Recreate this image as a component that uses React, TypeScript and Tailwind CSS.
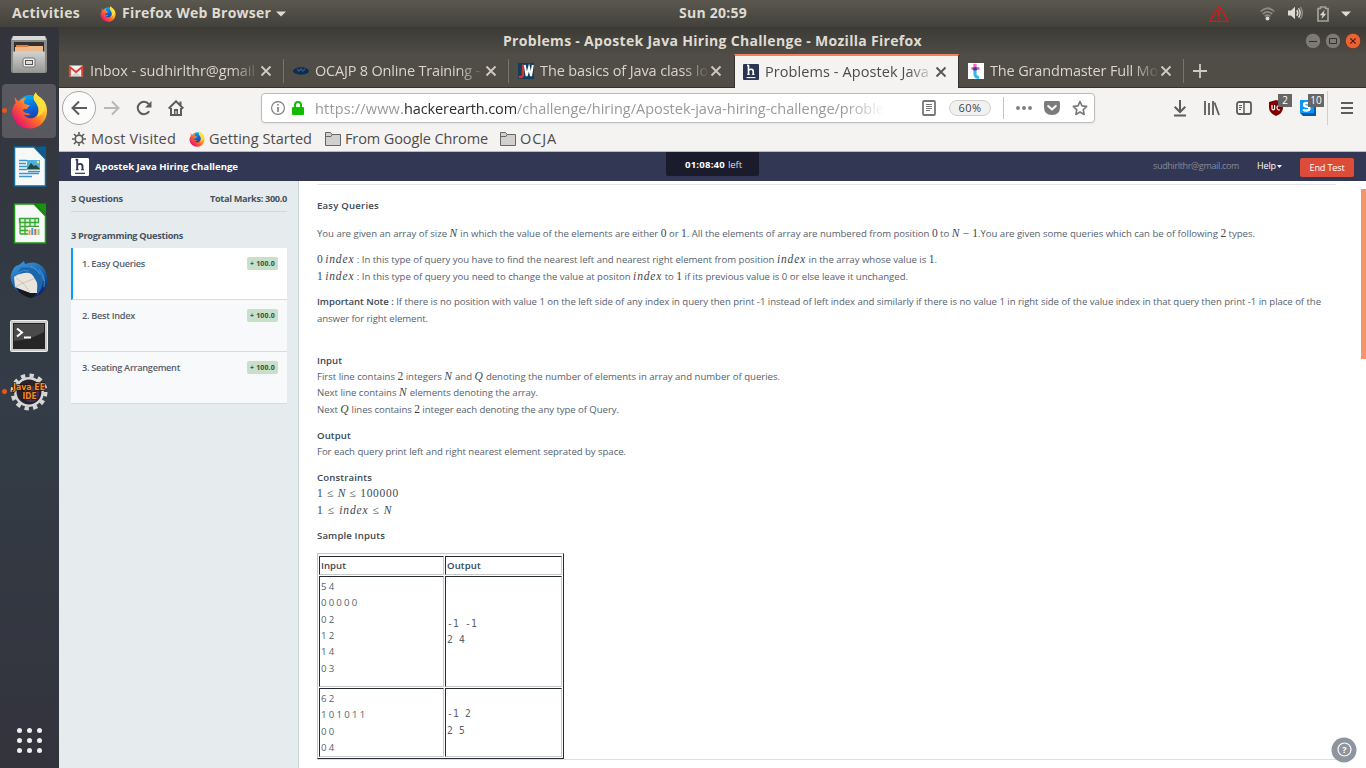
import React, { useLayoutEffect, useRef } from "react";

/* Spreads its text over an exact width by adjusting the tracking. */
function Fit({ w, className = "", children }: { w: number; className?: string; children: React.ReactNode }) {
  const ref = useRef<HTMLSpanElement>(null);
  useLayoutEffect(() => {
    const el = ref.current;
    if (!el) return;
    const n = (el.textContent || "").length;
    let d = 0;
    el.style.letterSpacing = "0px";
    for (let i = 0; i < 3; i++) {
      d += (w - el.getBoundingClientRect().width) / n;
      el.style.letterSpacing = d + "px";
    }
  }, [w]);
  return (
    <span ref={ref} className={"inline-block whitespace-pre " + className}>
      {children}
    </span>
  );
}

function Firefox({ size, id }: { size: number; id: string }) {
  return (
    <svg width={size} height={size} viewBox="0 0 38 38" className="block">
      <defs>
        <linearGradient id={id + "a"} x1="0.9" y1="0.1" x2="0.15" y2="0.85">
          <stop offset="0" stopColor="#fff44f" />
          <stop offset="0.35" stopColor="#ffb02a" />
          <stop offset="0.6" stopColor="#ff6a2a" />
          <stop offset="1" stopColor="#e8156a" />
        </linearGradient>
        <linearGradient id={id + "b"} x1="0.3" y1="0" x2="0.6" y2="1">
          <stop offset="0" stopColor="#00b3f4" />
          <stop offset="0.5" stopColor="#0a62d8" />
          <stop offset="1" stopColor="#362d84" />
        </linearGradient>
      </defs>
      <circle cx="20" cy="18" r="15" fill={"url(#" + id + "b)"} />
      <path
        d="M4 5c-.5 3 .5 5 1 6C2 14 1 18 1.200 21C2 31 10 37.500 19 37.500C30 37.500 37 29 37 19.500C37 12 33 8 30 5.500C27 3.500 26 2 25.500.5C22.500 4 23 7 24.500 9.500C27 13 29 17 28 21C27 25 23 27.500 19.500 27C16 26.500 13.500 24.500 13.500 23C15 24 18 24.500 20 22.500C18 22 13 21.500 12 19C12.500 17 15 17.500 16.500 17.500C17 15.500 19 14.500 19.500 13.500C17 13 14.500 13 13.500 11.500C13 9 14 7.500 16 6C12.500 6 10 7.500 8.500 9.500C6.500 9 5 8 4 5Z"
        fill={"url(#" + id + "a)"}
      />
      <path d="M25.500.5C22.500 4 23 7 24.500 9.500C29 14 30 21 26 26C35 22 37 14 34 9.500C32 7 27 4.500 25.500.5Z" fill="#ffe23c" opacity=".85" />
    </svg>
  );
}

function HLogo({ size, fg, bg }: { size: number; fg: string; bg: string }) {
  return (
    <svg width={size} height={size} viewBox="0 0 18 18" className="block shrink-0">
      <rect width="18" height="18" rx="1.200" fill={bg} />
      <path d="M6.200 1V12M6.500 7.200c.8-1.600 5-2.300 5 1.200V12M4.600 1.600h1.700" stroke={fg} strokeWidth="1.900" fill="none" />
      <path d="M4.800 11.800h2.800M10 11.800h3" stroke={fg} strokeWidth="1" />
      <path d="M4 15.300h10" stroke={fg} strokeWidth="1.200" />
    </svg>
  );
}

function TabIcon({ kind }: { kind: string }) {
  if (kind === "gmail")
    return (
      <svg width="16" height="16" viewBox="0 0 16 16" className="block">
        <path d="M1 2.500h14v11H1z" fill="#f2f2f2" />
        <path d="M3 13 8 8.500 13 13" fill="#d5d5d5" />
        <path d="M1.800 13.500V4L8 9l6.200-5v9.500" stroke="#d93f33" strokeWidth="2" fill="none" />
      </svg>
    );
  if (kind === "ocajp")
    return (
      <svg width="16" height="16" viewBox="0 0 16 16" className="block">
        <ellipse cx="8" cy="8" rx="8" ry="3.700" fill="#0e2b52" />
        <path d="M4 6 6 8.200 8 6 10 8.200 12 6" stroke="#3c587a" strokeWidth="1.200" fill="none" />
      </svg>
    );
  if (kind === "jw")
    return (
      <svg width="16" height="16" viewBox="0 0 16 16" className="block">
        <rect width="16" height="16" fill="#123e5e" />
        <path d="M5 1.500V11.500Q5 14 2.500 14H.8" stroke="#dc3328" strokeWidth="2.300" fill="none" />
        <path d="M6.800 2 8.600 13 11 4.500 13 13 14.800 2" stroke="#fff" strokeWidth="2" fill="none" />
      </svg>
    );
  if (kind === "he") return <HLogo size={16} fg="#fff" bg="#2c3454" />;
  return (
    <svg width="16" height="16" viewBox="0 0 16 16" className="block">
      <rect width="16" height="16" fill="#fff" />
      <path d="M7 6v5q0 3.500 4 3.300" stroke="#38b8e4" strokeWidth="3.200" fill="none" />
      <path d="M7 .8V7" stroke="#f469b8" strokeWidth="3.200" />
      <path d="M3.500 5.500h8" stroke="#c94fc0" strokeWidth="2.400" />
      <path d="M5.400 4.300h3.300v3.200H5.400z" fill="#5428b0" />
    </svg>
  );
}

const tabs = [
  { icon: "gmail", text: "Inbox - sudhirlthr@gmail", w: 165 },
  { icon: "ocajp", text: "OCAJP 8 Online Training -", w: 165 },
  { icon: "jw", text: "The basics of Java class lo", w: 168 },
  { icon: "he", text: "Problems - Apostek Java", w: 164, active: true },
  { icon: "t", text: "The Grandmaster Full Mo", w: 168 },
];

function Tab({ icon, text, w, active }: { icon: string; text: string; w: number; active?: boolean }) {
  return (
    <div
      className={
        "flex h-full w-[225px] shrink-0 items-center " +
        (active
          ? "border-x border-t-2 border-x-[#33322e] border-t-[#f2825a] bg-[#f4f3f1] pl-[8px] text-[#4c4c4c]"
          : "border-b border-[#33322e] bg-[#504d46] pt-px pl-[9px] text-[#d9d5cb]")
      }
    >
      <TabIcon kind={icon} />
      <div className="ml-[6px] w-[170px] text-[14.5px] leading-5 [mask-image:linear-gradient(to_right,black_84%,transparent_100%)]">
        <Fit w={w}>{text}</Fit>
      </div>
      <svg width="12" height="12" viewBox="0 0 12 12" className="block">
        <path d="M1.500 1.500l9 9M10.500 1.500l-9 9" stroke={active ? "#555" : "#cfcbc2"} strokeWidth="1.800" />
      </svg>
      {!active && icon !== "jw" && <div className="ml-auto h-6 w-px bg-[#78756d]" />}
    </div>
  );
}

function Folder() {
  return (
    <svg width="16" height="14" viewBox="0 0 16 14" className="block">
      <path d="M.5 13.500V.5h5l1.500 2h8.500v11z" fill="#d2d0ce" stroke="#666" />
      <path d="M.5 4.500H6l1.200-2" fill="none" stroke="#666" />
    </svg>
  );
}

function Dock() {
  return (
    <div className="flex w-[59px] shrink-0 flex-col items-center bg-linear-to-b from-[#33343b] via-[#333d47] to-[#33333c]">
      <div className="flex h-[56px] items-center pr-[2px] pb-[2px]">
        <svg width="36" height="37" viewBox="0 0 36 37">
          <defs>
            <linearGradient id="cab" x1="0" y1="0" x2="0" y2="1">
              <stop offset="0" stopColor="#d2d2d0" />
              <stop offset="1" stopColor="#979795" />
            </linearGradient>
          </defs>
          <path d="M2 0h32l2 3v31q0 3-2 3H2q-2 0-2-3V3z" fill="#8b8b89" />
          <path d="M2 0h32l1 4H1z" fill="#d9d9d7" />
          <rect x="3" y="6" width="30" height="12" fill="#33302e" />
          <path d="M5 9h12l1 1h13v6H5z" fill="#e57d3c" />
          <path d="M4 11h13l1-1h14v6H4z" fill="#efba8a" />
          <rect x="2" y="15.500" width="32" height="21" rx="1" fill="url(#cab)" />
          <rect x="12" y="22" width="12" height="9" rx="2" fill="#ececec" stroke="#777" />
          <rect x="14.500" y="24.500" width="7" height="4" fill="#ddd" stroke="#555" />
        </svg>
      </div>
      <div className="flex h-[55px] w-full items-center">
        <div className="ml-0.5 flex h-[54px] w-[54px] items-center rounded bg-[#58585e]">
          <span className="size-[5px] shrink-0 rounded-full bg-[#e95420]" />
          <div className="ml-1"><Firefox size={37} id="dock" /></div>
        </div>
      </div>
      <div className="flex h-[57px] items-center">
        <svg width="34" height="41" viewBox="0 0 34 41">
          <path d="M1.500 1H21L32.500 13V40H1.500z" fill="#f7f8f8" stroke="#126a9d" strokeWidth="1.500" />
          <path d="M22 .5h11V12z" fill="#095f94" />
          <path d="M6 14.500h8M6 17.500h7M6 20.500h8M6 23.500h8M6 27.500h20M6 30.500h13M15 25.500h12" stroke="#3c98ca" strokeWidth="1.300" />
          <rect x="14" y="14" width="13" height="10" fill="#4eb0de" />
          <path d="M14 23 18 17l3 3 2-1 4 4z" fill="#294a38" />
          <circle cx="25" cy="16" r="1.300" fill="#fbe36a" />
        </svg>
      </div>
      <div className="flex h-[56px] items-center">
        <svg width="34" height="41" viewBox="0 0 34 41">
          <path d="M1.500 1H21L32.500 13V40H1.500z" fill="#f7f8f8" stroke="#1f9412" strokeWidth="1.500" />
          <path d="M22 .5h11V12z" fill="#19930b" />
          <rect x="7" y="15" width="18" height="16" fill="#e5f5e0" />
          <path d="M6.500 15.500h19v4h-19zM7 15v16M12 15v16M17 15v16M22 15v10M7 23.500h19M7 27.500h10M7 31h10" stroke="#39a535" strokeWidth="1.300" fill="none" />
          <rect x="15" y="24" width="12" height="8" fill="#f3f3f3" />
          <path d="M16.500 32v-5" stroke="#e99a41" strokeWidth="2" />
          <path d="M19.300 32v-7" stroke="#4a9bd4" strokeWidth="2" />
          <path d="M22.300 32v-6" stroke="#d66b42" strokeWidth="2" />
          <path d="M25.500 32v-6" stroke="#92cf86" strokeWidth="2" />
        </svg>
      </div>
      <div className="flex h-[57px] items-center pr-[2px] pb-[2px]">
        <svg width="38" height="38" viewBox="0 0 38 38">
          <defs>
            <linearGradient id="tb" x1="0.2" y1="0" x2="0.7" y2="1">
              <stop offset="0" stopColor="#3b98db" />
              <stop offset="0.5" stopColor="#1c63af" />
              <stop offset="1" stopColor="#111d62" />
            </linearGradient>
          </defs>
          <path d="M9 5 14 1l1 3Q28-1 35 10q5 11 0 19-5 8-15 9L7 31Q-1 22 1 14 4 5 9 5z" fill="url(#tb)" />
          <path d="M4 17Q12 11 23 13L28 20 27 33 20 33 5 27z" fill="#e9e4dc" />
          <path d="M6 18 13 23 26 18M5 27 13 23 20 32" stroke="#c6beb1" strokeWidth=".8" fill="none" />
          <path d="M6 28 20 33 27 33 22 38Q12 37 6 28" fill="#17171d" />
          <path d="M8 14Q9 5 20 6 32 8 33 19 33 28 27 35 29 24 25 19 21 11 14 13z" fill="#1c66ad" />
          <path d="M13 7Q24 5 30 14M20 6q11 3 14 15M29 9q7 7 5 18M8 13q5-4 11-2" stroke="#469bd8" strokeWidth=".8" fill="none" />
        </svg>
      </div>
      <div className="flex h-[57px] items-center pr-[2px] pb-[2px]">
        <svg width="38" height="32" viewBox="0 0 38 32">
          <rect x=".5" y=".5" width="37" height="31" rx="1" fill="#c9c9c7" stroke="#eee" />
          <rect x="3" y="3" width="32" height="26" fill="#252525" />
          <path d="M4 4h30v8Q20 20 4 21z" fill="#4a4a4a" />
          <path d="M7 8.500 12 12.500 7 16.500M14 17.500h7" stroke="#fff" strokeWidth="2" fill="none" />
        </svg>
      </div>
      <div className="flex h-[53px] w-full items-center">
        <span className="ml-0.5 size-[5px] rounded-full bg-[#e95420]" />
        <svg width="38" height="38" viewBox="0 0 38 38" className="ml-[3px]">
          <circle cx="19" cy="19" r="16.500" fill="none" stroke="#d6d6d4" strokeWidth="4" strokeDasharray="4.320 4.320" />
          <circle cx="19" cy="19" r="13.700" fill="#27222f" stroke="#d6d6d4" strokeWidth="2.500" />
          <circle cx="21" cy="21" r="8" fill="#44345b" />
          <text x="19" y="17" textAnchor="middle" fontFamily="DejaVu Sans" fontSize="8.200" fontWeight="bold" fill="#f28a24" stroke="#2b170a" strokeWidth="1.600" paintOrder="stroke" textLength="32" lengthAdjust="spacingAndGlyphs">Java EE</text>
          <text x="19.500" y="25.500" textAnchor="middle" fontFamily="DejaVu Sans" fontSize="8.200" fontWeight="bold" fill="#f28a24" stroke="#2b170a" strokeWidth="1.600" paintOrder="stroke" textLength="14" lengthAdjust="spacingAndGlyphs">IDE</text>
        </svg>
      </div>
      <div className="mt-auto mb-[15px] grid grid-cols-3 gap-[5px] pr-px">
        {Array.from({ length: 9 }).map((_, i) => (
          <span key={i} className="size-[5px] rounded-full bg-[#eeeeec]" />
        ))}
      </div>
    </div>
  );
}

function TopBar() {
  return (
    <div className="flex h-[27px] shrink-0 items-center bg-linear-to-b from-[#5b584f] to-[#42413b] pl-3 text-[14px] leading-[24px] font-bold text-[#dfdbd2]">
      <Fit w={68} className="pb-0.5">Activities</Fit>
      <div className="ml-5 w-[22px]"><Firefox size={16} id="top" /></div>
      <Fit w={149} className="pb-0.5">Firefox Web Browser</Fit>
      <svg width="10" height="6" viewBox="0 0 10 6" className="ml-[5px]"><path d="M0 .5h10L5 5.500z" fill="#dfdbd2" /></svg>
      <Fit w={68} className="ml-[393px] pb-0.5">Sun 20:59</Fit>
      <svg width="20" height="17" viewBox="0 0 20 17" className="mb-px ml-auto">
        <path d="M10 1 19.300 16.400H.7z" fill="none" stroke="#ee1111" strokeWidth="1.200" />
        <path d="M10 5.500v6" stroke="#ee1111" strokeWidth="1.600" />
        <path d="M10 13v1.700" stroke="#ee1111" strokeWidth="1.600" />
      </svg>
      <svg width="15" height="14" viewBox="0 0 15 14" className="ml-[31px]">
        <path d="M.7 4.500Q7.500-2 14.300 4.500M2.800 7q4.700-4.200 9.400 0M4.700 9.300q2.800-2.300 5.600 0" fill="none" stroke="#8c8980" strokeWidth="1.700" />
        <circle cx="7.500" cy="11.500" r="2" fill="#dfdbd2" />
      </svg>
      <svg width="17" height="14" viewBox="0 0 17 14" className="mb-px ml-3">
        <path d="M1 4.500h3L8 .8v12.400L4 9.500H1z" fill="#dfdbd2" />
        <path d="M9.800 4.200q2 2.800 0 5.600" fill="none" stroke="#dfdbd2" strokeWidth="1.500" />
        <path d="M11.500 2.400q3.300 4.600 0 9.200" fill="none" stroke="#dfdbd2" strokeWidth="1.400" />
        <path d="M13.300.8q4.200 6.200 0 12.400" fill="none" stroke="#8c8980" strokeWidth="1.500" />
      </svg>
      <svg width="12" height="16" viewBox="0 0 12 16" className="ml-[13px]">
        <path d="M1 2.500h2.500V1h5v1.500H11v12.500H1z" fill="none" stroke="#a5a299" strokeWidth="1.700" />
        <path d="M7.700 4 2.800 9.300h2.700L4.400 13 9.300 7.700H6.700z" fill="#dfdbd2" />
      </svg>
      <svg width="10" height="6" viewBox="0 0 10 6" className="mr-[15px] ml-3"><path d="M0 .5h10L5 5.500z" fill="#dfdbd2" /></svg>
    </div>
  );
}

function TitleBar() {
  return (
    <div className="flex h-[27px] shrink-0 items-center bg-linear-to-b from-[#3b3a35] to-[#4f4c46] pl-[444px] text-[14px] leading-7 font-bold text-[#dfdbd2]">
      <Fit w={419}>Problems - Apostek Java Hiring Challenge - Mozilla Firefox</Fit>
      <div className="mr-[5px] ml-auto flex gap-1">
        <svg width="16" height="16" viewBox="0 0 16 16"><circle cx="8" cy="8" r="7.700" fill="#7c7a73" stroke="#33322e" strokeWidth=".6" /><path d="M4 8.500h8" stroke="#33322e" /></svg>
        <svg width="16" height="16" viewBox="0 0 16 16"><circle cx="8" cy="8" r="7.700" fill="#7c7a73" stroke="#33322e" strokeWidth=".6" /><path d="M4.500 5.500h7v5h-7z" stroke="#33322e" fill="none" /></svg>
        <svg width="16" height="16" viewBox="0 0 16 16"><circle cx="8" cy="8" r="7.700" fill="#ec6233" stroke="#33322e" strokeWidth=".6" /><path d="M5.300 5.300l5.400 5.400M10.700 5.300l-5.400 5.400" stroke="#40210f" strokeWidth="1.200" /></svg>
      </div>
    </div>
  );
}

const S = { fill: "none", stroke: "#5c5c5c", strokeWidth: 2 } as const;

function NavBar() {
  return (
    <div className="flex h-10 shrink-0 items-center bg-[#f4f3f1]">
      <div className="ml-[3px] flex size-[34px] items-center justify-center rounded-full border border-[#a9a8a6] bg-[#fcfcfc]">
        <svg width="16" height="16" viewBox="0 0 16 16"><path d="M16 8H1.500M8 1.500 1.500 8 8 14.500" {...S} /></svg>
      </div>
      <svg width="16" height="16" viewBox="0 0 16 16" className="ml-2"><path d="M0 8h14.500M8 1.500 14.500 8 8 14.500" {...S} stroke="#b9b8b6" /></svg>
      <svg width="16" height="16" viewBox="0 0 16 16" className="ml-4">
        <path d="M13.200 11.300A6.200 6.200 0 1 1 12.700 4" {...S} />
        <path d="M15.500 1v6.500H9z" fill="#5c5c5c" />
      </svg>
      <svg width="16" height="16" viewBox="0 0 16 16" className="ml-4">
        <path d="M.7 8.500 8 1.300l7.300 7.200M3 8v7h10V8M12.500 1.500V5" {...S} />
        <path d="M6 9h4v6H6z" fill="#5c5c5c" /><path d="M7.500 11h1v3h-1z" fill="#f4f3f1" />
      </svg>
      <div className="ml-[77px] flex h-[30px] w-[834px] items-center rounded-[4px] border border-[#bdbcba] bg-white text-[14.5px] text-[#9a9a9a] shadow-sm shadow-black/5">
        <svg width="14" height="14" viewBox="0 0 14 14" className="ml-[9px]">
          <circle cx="7" cy="7" r="6.400" fill="none" stroke="#777" strokeWidth="1.100" /><path d="M7 3v1.600M7 6v5" stroke="#777" strokeWidth="1.500" />
        </svg>
        <svg width="12" height="14" viewBox="0 0 12 14" className="ml-[7px]">
          <rect y="6" width="12" height="8" rx="1" fill="#12bc00" /><path d="M3 7V4a3 3 0 0 1 6 0v3" fill="none" stroke="#12bc00" strokeWidth="2" />
        </svg>
        <div className="ml-[11px] w-[570px] whitespace-nowrap pt-px [mask-image:linear-gradient(to_right,black_93%,transparent_100%)]">
          <Fit w={89}>https://www.</Fit><Fit w={113} className="text-[#2e2e2e]">hackerearth.com</Fit><Fit w={367}>/challenge/hiring/Apostek-java-hiring-challenge/proble</Fit>
        </div>
        <svg width="14" height="16" viewBox="0 0 14 16" className="ml-[37px]">
          <rect x="1" y="1" width="12" height="14" rx="1" fill="none" stroke="#777" strokeWidth="1.800" /><path d="M4 4.500h6M4 6.500h6M4 8.500h6M4 10.500h4" stroke="#777" />
        </svg>
        <div className="ml-[13px] flex h-4 w-[42px] items-center justify-center rounded-full border border-[#cfcecd] bg-[#f1f1f1] text-[11px] leading-3 text-[#444]"><Fit w={23}>60%</Fit></div>
        <div className="ml-3 h-[22px] w-px bg-[#c4c4c4]" />
        <svg width="16" height="4" viewBox="0 0 16 4" className="ml-[12px]"><circle cx="2" cy="2" r="1.900" fill="#7b7b7b" /><circle cx="8" cy="2" r="1.900" fill="#7b7b7b" /><circle cx="14" cy="2" r="1.900" fill="#7b7b7b" /></svg>
        <svg width="16" height="14" viewBox="0 0 16 14" className="ml-3"><path d="M1.500 0h13Q16 0 16 1.500V6Q16 14 8 14T0 6V1.500Q0 0 1.500 0z" fill="#7b7b7b" /><path d="M4.200 5 8 8.500 11.800 5" stroke="#fff" strokeWidth="2" fill="none" strokeLinecap="round" /></svg>
        <svg width="16" height="16" viewBox="0 0 16 16" className="ml-3"><path d="M8 1.500 10 5.800 14.700 6.400 11.300 9.700 12.100 14.400 8 12.100 3.900 14.400 4.700 9.700 1.300 6.400 6 5.800z" fill="none" stroke="#7b7b7b" strokeWidth="1.700" strokeLinejoin="round" /></svg>
      </div>
      <svg width="14" height="17" viewBox="0 0 14 17" className="ml-[78px]"><path d="M7 0v12M1.700 6.700 7 12l5.300-5.300M1 15.500h12" {...S} /></svg>
      <svg width="16" height="16" viewBox="0 0 16 16" className="ml-[17px]"><path d="M1 1v14M5 3v12M9 1v14" {...S} strokeWidth="1.800" /><path d="M10.500 2.500 15 15" {...S} strokeWidth="1.800" /></svg>
      <svg width="16" height="14" viewBox="0 0 16 14" className="ml-4"><rect x="1" y="1" width="14" height="12" rx="2" {...S} strokeWidth="1.800" /><path d="M8 1v12" {...S} strokeWidth="1.500" /><path d="M3 4.500h3M3 6.500h3M3 8.500h2" stroke="#5c5c5c" /></svg>
      <div className="relative ml-[17px] h-4 w-4">
        <svg width="14" height="16" viewBox="0 0 14 16"><path d="M7 0l7 2v6q0 5-7 8-7-3-7-8V2z" fill="#800000" /><path d="M3 5v3.500q0 1.300 1.300 1.300t1.300-1.300V5M11 5.500H9.500Q8 6 8 7.800T9.500 10H11" fill="none" stroke="#fff" strokeWidth="1.200" /></svg>
        <span className="absolute -top-[6px] left-[9px] flex h-[13px] w-[14px] items-center justify-center bg-[#666] text-[10px] text-white">2</span>
      </div>
      <div className="relative ml-[15px] h-4 w-4">
        <svg width="16" height="16" viewBox="0 0 16 16"><path d="M0 0h13l3 3v13H3l-3-3z" fill="#075aab" /><path d="M0 0h14v13H0z" fill="#0996f8" /><path d="M10 4.200Q9 3 6.700 3 4 3 4 4.700T6.700 6.700 9.500 8.600 6.700 10.500 3.500 9.200" fill="none" stroke="#fff" strokeWidth="2.300" /></svg>
        <span className="absolute -top-[6px] left-[8px] flex h-[13px] w-4 items-center justify-center bg-[#666] text-[10px] text-white">10</span>
      </div>
      <div className="ml-[11px] h-[34px] w-px bg-[#cfcecc]" />
      <svg width="12" height="12" viewBox="0 0 12 12" className="ml-[13px]"><path d="M0 1h12M0 6h12M0 11h12" {...S} /></svg>
    </div>
  );
}

function Bookmarks() {
  return (
    <div className="flex h-[24px] shrink-0 items-center border-b border-[#bcbbb9] bg-[#f4f3f1] pb-px pl-[13px] text-[14.500px] leading-[20px] text-[#4c4c4c]">
      <svg width="14" height="14" viewBox="0 0 14 14">
        <circle cx="7" cy="7" r="3.800" fill="none" stroke="#5c5c5c" strokeWidth="1.800" />
        <path d="M7 0v2.500M7 11.500V14M0 7h2.500M11.500 7H14M2 2l2 2M10 10l2 2M12 2l-2 2M4 10l-2 2" stroke="#5c5c5c" strokeWidth="1.600" />
      </svg>
      <Fit w={85} className="ml-[5px]">Most Visited</Fit>
      <div className="mr-1 ml-[13px]"><Firefox size={16} id="bm" /></div>
      <Fit w={103}>Getting Started</Fit>
      <div className="mr-1 ml-[13px]"><Folder /></div>
      <Fit w={143}>From Google Chrome</Fit>
      <div className="mr-1 ml-3"><Folder /></div>
      <Fit w={37}>OCJA</Fit>
    </div>
  );
}

function SiteHeader() {
  return (
    <div className="flex h-[29px] shrink-0 bg-[#323754] text-[9.600px] leading-[29px]">
      <div className="flex w-[607px] items-center pl-3">
        <HLogo size={18} fg="#323754" bg="#fff" />
        <Fit w={143} className="ml-[6px] font-bold text-white">Apostek Java Hiring Challenge</Fit>
      </div>
      <div className="h-6 w-[93px] rounded-b-[2px] bg-[#1a1c2b] pl-[19px] leading-[25px] text-white">
        <Fit w={40} className="font-bold">01:08:40</Fit><Fit w={14} className="ml-[3px] text-[#dcdde4]">left</Fit>
      </div>
      <div className="ml-auto flex pr-3 leading-[27px]">
        <Fit w={86} className="text-[9px] text-[#858a9c]">sudhirlthr@gmail.com</Fit>
        <Fit w={19} className="ml-[18px] text-[9px] text-white">Help</Fit>
        <svg width="5" height="3" viewBox="0 0 5 3" className="mt-[13px] ml-px"><path d="M0 0h5L2.500 3z" fill="#fff" /></svg>
        <div className="mt-[6px] ml-[18px] flex h-[19px] w-[54px] items-center justify-center rounded-[2px] bg-[#dd4b39] pb-px text-[9.200px] text-white"><Fit w={35}>End Test</Fit></div>
      </div>
    </div>
  );
}

function Question({ text, w, active }: { text: string; w: number; active?: boolean }) {
  return (
    <div className={"flex h-[52px] items-start justify-between border-b border-[#d8dcdf] pt-[9px] pr-[9px] " + (active ? "border-l-2 border-l-[#0a9bf5] bg-white pl-[9px]" : "bg-[#f8f9fb] pl-[11px]")}>
      <Fit w={w} className="text-[9.200px] leading-[14px] font-semibold text-[#525f6d]">{text}</Fit>
      <span className="flex h-[13px] w-[31px] items-center justify-center rounded-[2px] bg-[#c8dfc8] pt-px text-[7px] font-bold text-[#3a4b4a]"><Fit w={25}>+ 100.0</Fit></span>
    </div>
  );
}

function Sidebar() {
  return (
    <div className="w-[240px] shrink-0 border-r border-[#cdd2d5] bg-[#e6ebee] px-3 pr-[11px] text-[9.200px] text-[#46535f]">
      <div className="flex h-[31px] justify-between border-b border-[#d2d7da] pt-[10px] leading-4 font-bold">
        <Fit w={52}>3 Questions</Fit><Fit w={77}>Total Marks: 300.0</Fit>
      </div>
      <div className="h-[36px] pt-4 leading-4 font-bold"><Fit w={112}>3 Programming Questions</Fit></div>
      <Question text="1. Easy Queries" w={63} active />
      <Question text="2. Best Index" w={53} />
      <Question text="3. Seating Arrangement" w={98} />
    </div>
  );
}

function M({ children, up }: { children: React.ReactNode; up?: boolean }) {
  return (
    <span
      className={
        "font-['Liberation_Serif',serif] text-[11.500px] leading-none text-[#3d4650] " +
        (up ? "" : children === "index" ? "tracking-[0.850px] italic" : "tracking-[0.600px] italic")
      }
    >
      {children}
    </span>
  );
}

function Row({ w, b, children }: { w: number; b?: boolean; children: React.ReactNode }) {
  return (
    <div className="h-[16.400px] leading-[16.400px]">
      <Fit w={w} className={"h-[16.400px] " + (b ? "font-semibold text-[#3c4854]" : "")}>{children}</Fit>
    </div>
  );
}

const cell = "border border-t-[#252b31] border-l-[#252b31] border-r-[#c6c8ca] border-b-[#c6c8ca] pl-px";

function Problem() {
  return (
    <div className="relative min-w-0 flex-1 overflow-hidden bg-white pl-[18px] text-[9.600px] text-[#56626e]">
      <div className="mt-[3px] h-px w-[1019px] bg-[#e2e4e6]" />
      <div className="mt-[13px]"><Row w={62} b>Easy Queries</Row></div>
      <div className="mt-[12px]">
        <Row w={938}>You are given an array of size <M>N</M> in which the value of the elements are either <M up>0</M> or <M up>1</M>. All the elements of array are numbered from position <M up>0</M> to <M>N</M><M up> − 1</M>.You are given some queries which can be of following <M up>2</M> types.</Row>
      </div>
      <div className="mt-[9.600px]">
        <Row w={620}><M up>0</M> <M>index</M> : In this type of query you have to find the nearest left and nearest right element from position <M>index</M> in the array whose value is <M up>1</M>.</Row>
        <Row w={591}><M up>1</M> <M>index</M> : In this type of query you need to change the value at positon <M>index</M> to <M up>1</M> if its previous value is 0 or else leave it unchanged.</Row>
      </div>
      <div className="mt-[9px]">
        <Row w={1004}><b className="font-semibold text-[#3c4854]">Important Note :</b> If there is no position with value 1 on the left side of any index in query then print -1 instead of left index and similarly if there is no value 1 in right side of the value index in that query then print -1 in place of the</Row>
        <Row w={111}>answer for right element.</Row>
      </div>
      <div className="mt-[25.600px]">
        <Row w={25} b>Input</Row>
        <Row w={463}>First line contains <M up>2</M> integers <M>N</M> and <M>Q</M> denoting the number of elements in array and number of queries.</Row>
        <Row w={221}>Next line contains <M>N</M> elements denoting the array.</Row>
        <Row w={302}>Next <M>Q</M> lines contains <M up>2</M> integer each denoting the any type of Query.</Row>
      </div>
      <div className="mt-[9.600px]">
        <Row w={34} b>Output</Row>
        <Row w={309}>For each query print left and right nearest element seprated by space.</Row>
      </div>
      <div className="mt-[9.400px]">
        <Row w={55} b>Constraints</Row>
        <Row w={82}><M up>1 ≤ </M><M>N</M><M up> ≤ 100000</M></Row>
        <Row w={76}><M up>1 ≤ </M><M>index</M><M up> ≤ </M><M>N</M></Row>
      </div>
      <div className="mt-[9.400px] h-[24.400px]"><Row w={68} b>Sample Inputs</Row></div>
      <div className="grid h-[206px] w-[247px] grid-cols-[125px_117px] grid-rows-[19px_111px_69px] gap-px border border-t-[#c6c8ca] border-r-[#252b31] border-b-[#252b31] border-l-[#c6c8ca] pt-[2px] pl-px">
        <div className={cell + " pt-px"}><Row w={25} b>Input</Row></div>
        <div className={cell + " pt-px"}><Row w={34} b>Output</Row></div>
        <div className={cell + " pt-[2px]"}>
          <Row w={13}>5 4</Row><Row w={36}>0 0 0 0 0</Row><Row w={13}>0 2</Row><Row w={13}>1 2</Row><Row w={13}>1 4</Row><Row w={13}>0 3</Row>
        </div>
        <div className={cell + " pt-[39px] font-['DejaVu_Sans_Mono',monospace]"}><Row w={30}>-1 -1</Row><Row w={18}>2 4</Row></div>
        <div className={cell + " pt-[2px]"}>
          <Row w={13}>6 2</Row><Row w={44}>1 0 1 0 1 1</Row><Row w={13}>0 0</Row><Row w={13}>0 4</Row>
        </div>
        <div className={cell + " pt-[17.500px] font-['DejaVu_Sans_Mono',monospace]"}><Row w={24}>-1 2</Row><Row w={18}>2 5</Row></div>
      </div>
      <div className="h-px w-[1019px] bg-[#dcdee0]" />
      <div className="absolute top-2 right-0 h-[170px] w-[5px] bg-[#f4946b]" />
      <svg width="26" height="26" viewBox="0 0 26 26" className="absolute right-[9px] bottom-[5px]">
        <circle cx="13" cy="13" r="12.500" fill="#8f959e" />
        <circle cx="13.500" cy="12.500" r="6.500" fill="none" stroke="#fff" strokeWidth="1.200" />
        <text x="13.300" y="16" textAnchor="middle" fontFamily="Open Sans" fontSize="9" fontWeight="bold" fill="#fff">?</text>
      </svg>
    </div>
  );
}

export default function App() {
  return (
    <div className="flex h-[768px] w-[1366px] flex-col overflow-hidden font-['Open_Sans',sans-serif]">
      <TopBar />
      <div className="flex min-h-0 flex-1">
        <Dock />
        <div className="flex min-w-0 flex-1 flex-col">
          <TitleBar />
          <div className="flex h-[34px] shrink-0 bg-[#504d46]">
            {tabs.map((t) => <Tab key={t.icon} {...t} />)}
            <div className="flex flex-1 items-center border-b border-[#33322e] pl-[9px]">
              <svg width="14" height="14" viewBox="0 0 14 14"><path d="M7 0v14M0 7h14" stroke="#cfcbc2" strokeWidth="1.800" /></svg>
            </div>
          </div>
          <NavBar />
          <Bookmarks />
          <SiteHeader />
          <div className="flex min-h-0 flex-1">
            <Sidebar />
            <Problem />
          </div>
        </div>
      </div>
    </div>
  );
}
